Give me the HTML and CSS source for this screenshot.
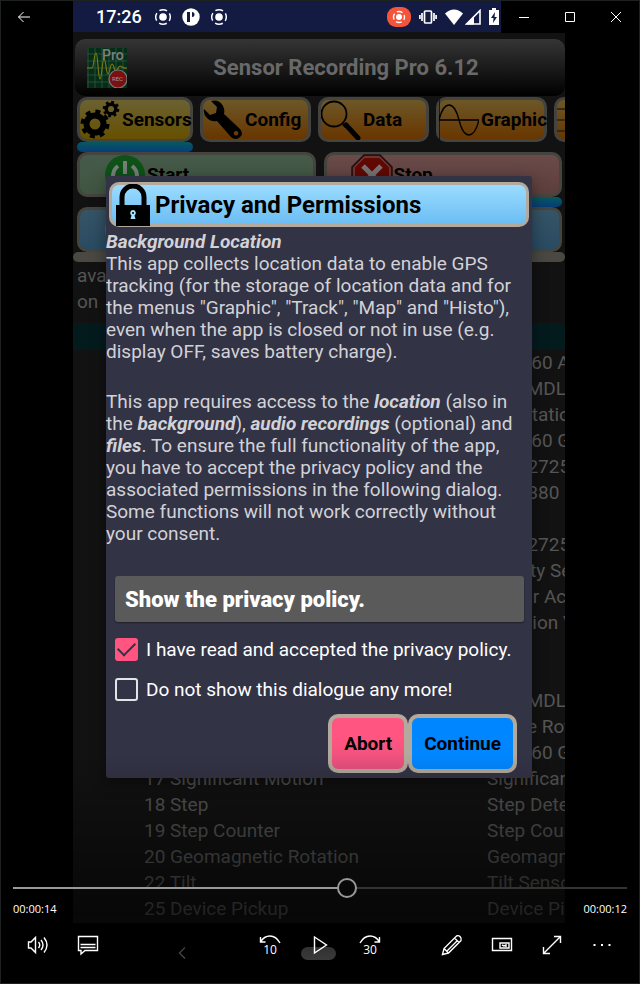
FILE: index.html
```
<!DOCTYPE html>
<html lang="en">

<head>
    <meta charset="UTF-8">
    <meta name="viewport" content="width=device-width, initial-scale=1.0">
    <title>Sensor Recording Pro</title>
    <link rel="stylesheet" href="styles.css">
</head>

<body>
    <div class="player">

        <div class="phone">
            <div class="status-bar">
                <span class="clock">17:26</span>
                <svg class="status-icon" viewBox="0 0 18 18"><circle cx="9" cy="9" r="3.800" fill="#fff"/><circle cx="9" cy="9" r="7.300" fill="none" stroke="#fff" stroke-width="1.500" stroke-dasharray="8 3.467" stroke-dashoffset="4"/></svg>
                <svg class="status-icon" viewBox="0 0 18 18"><circle cx="9" cy="9" r="8.700" fill="#fff"/><path d="M5 4h3v10H5zM10 4a2.500 2.500 0 1 1 0 5z" fill="#131b43"/></svg>
                <svg class="status-icon" viewBox="0 0 18 18"><circle cx="9" cy="9" r="3.800" fill="#fff"/><circle cx="9" cy="9" r="7.300" fill="none" stroke="#fff" stroke-width="1.500" stroke-dasharray="8 3.467" stroke-dashoffset="4"/></svg>
                <span class="status-right">
                    <svg width="24" height="20" viewBox="0 0 24 20"><rect width="24" height="20" rx="9" fill="#f4543a"/><circle cx="12" cy="10" r="3" fill="#fff"/><circle cx="12" cy="10" r="5.5" fill="none" stroke="#fff" stroke-width="1.4" stroke-dasharray="6 2.64" stroke-dashoffset="3"/></svg>
                    <svg width="18" height="16" viewBox="0 0 18 16" fill="none" stroke="#fff" stroke-width="1.7"><rect x="5.5" y="2" width="7" height="12" rx="1"/><path d="M3 4v8M.9 6v4M15 4v8M17.1 6v4"/></svg>
                    <svg width="18" height="16" viewBox="0 0 18 16"><path d="M0 4.500Q9-3.500 18 4.500L9 16z" fill="#fff"/></svg>
                    <svg width="16" height="16" viewBox="0 0 16 16"><path d="M1.500 15L15 1.500V15z" fill="none" stroke="#fff" stroke-width="1.6"/><path d="M1 15.500L9 7v8.500z" fill="#fff"/></svg>
                    <svg width="10" height="17" viewBox="0 0 10 17"><path d="M3 0h4v2h3v15H0V2h3z" fill="#fff"/><path d="M6 4L2 10h2.500L4 15l4-6H5.500z" fill="#131b43"/></svg>
                </span>
            </div>

            <div class="app">
                <header class="app-header">
                    <svg width="40" height="40" viewBox="0 0 40 40">
                        <rect width="40" height="40" fill="#062d18"/>
                        <path d="M1 0v40M8 0v40M15 0v40M22 0v40M29 0v40M36 0v40M0 6h40M0 13h40M0 20h40M0 27h40M0 34h40" stroke="#2e5540" stroke-width=".8"/>
                        <path d="M0 20h5C7 20 7 5 9 5s2 26 4 26 2-20 4-20 2 15 4 15 2-10 4-10 2 7 4 7 2-5 4-5 3 3 7 2" fill="none" stroke="#777b12" stroke-width="1.2"/>
                        <circle cx="31" cy="31" r="9" fill="#7c1010" stroke="#777" stroke-width="1.2"/>
                        <text x="15" y="12" class="logo-pro">Pro</text>
                        <text x="25" y="33" class="logo-rec">REC</text>
                    </svg>
                    <h1>Sensor Recording Pro 6.12</h1>
                </header>

                <nav class="tabs">
                    <button class="tab selected">
                        <svg viewBox="0 0 40 40"><g fill="none" stroke="#000"><circle cx="15" cy="24" r="8.500" stroke-width="6"/><circle cx="15" cy="24" r="12.500" stroke-width="4" stroke-dasharray="4.900 4.920"/><circle cx="31" cy="9" r="4.800" stroke-width="3.400"/><circle cx="31" cy="9" r="7" stroke-width="2.600" stroke-dasharray="2.750 2.750"/></g></svg>
                        Sensors
                    </button>
                    <button class="tab">
                        <svg viewBox="0 0 40 40"><path d="M8 1q8-2 12 5 2 4 1 8l16 15q4 5 0 8-4 4-9 0L14 21q-6 1-10-3Q0 14 1 9l6 6 6-2 1-6zM33 31a2.300 2.300 0 1 0 .1 0z" fill-rule="evenodd"/></svg>
                        Config
                    </button>
                    <button class="tab">
                        <svg viewBox="0 0 40 40" fill="none" stroke="#000"><circle cx="13" cy="14" r="12.500" stroke-width="1.800"/><path d="M22 24l3 3" stroke-width="2.500"/><path d="M25 25l12 13" stroke-width="5" stroke-linecap="round"/></svg>
                        Data
                    </button>
                    <button class="tab">
                        <svg viewBox="0 0 40 40" fill="none" stroke="#000" stroke-width="1.300"><path d="M0 0v40M0 20h40M0 20C5 0 15 0 20 20S35 40 40 20"/></svg>
                        Graphic
                    </button>
                    <button class="tab" aria-label="Track">
                        <svg viewBox="0 0 40 40" fill="none" stroke="#222" stroke-width="1.500"><path d="M0 9h40M0 20h40M0 31h40"/></svg>
                    </button>
                </nav>
                <div class="tab-marker"></div>

                <div class="actions">
                    <button class="action start">
                        <svg viewBox="0 0 42 42"><circle cx="21" cy="21" r="20" fill="#0e5218"/><path d="M14 12a12 12 0 1 0 14 0M21 7v13" fill="none" stroke="#777f78" stroke-width="4"/></svg>
                        Start
                    </button>
                    <button class="action stop">
                        <svg viewBox="0 0 42 42"><path d="M13 1h16l12 12v16L29 41H13L1 29V13z" fill="#610803" stroke="#211010" stroke-width="1.500"/><path d="M13.500 3h15L39 13.500v15L28.500 39h-15L3 28.500v-15z" fill="none" stroke="#756565"/><path d="M12 12l18 18M30 12L12 30" stroke="#787272" stroke-width="5"/></svg>
                        Stop
                    </button>
                </div>
                <div class="action-marker"></div>
                <div class="actions">
                    <button class="action info" aria-label="Info">
                        <svg viewBox="0 0 42 42"><circle cx="21" cy="21" r="20" fill="#526470"/></svg>
                    </button>
                    <button class="action info" aria-label="Help"></button>
                </div>
                <div class="divider"></div>

                <p class="available">available<br>on</p>
                <table class="sensors">
                    <thead>
                        <tr><th></th><th></th></tr>
                    </thead>
                    <tbody>
                        <tr><td></td><td>BMI160 Accelerometer</td></tr>
                        <tr><td></td><td>AK0 MDL</td></tr>
                        <tr><td></td><td>Orientation</td></tr>
                        <tr><td></td><td>BMI160 Gyroscope</td></tr>
                        <tr><td></td><td>TMD2725</td></tr>
                        <tr><td></td><td>BMP380</td></tr>
                        <tr><td></td><td></td></tr>
                        <tr><td></td><td>TMD2725</td></tr>
                        <tr><td></td><td>Gravity Sensor</td></tr>
                        <tr><td></td><td>Linear Acceleration</td></tr>
                        <tr><td></td><td>Rotation Vector</td></tr>
                        <tr><td></td><td></td></tr>
                        <tr><td></td><td></td></tr>
                        <tr><td></td><td>AK0 MDL</td></tr>
                        <tr><td></td><td>Game Rotation</td></tr>
                        <tr><td></td><td>BMI160 Gyroscope</td></tr>
                        <tr><td>17 Significant Motion</td><td>Significant Motion</td></tr>
                        <tr><td>18 Step</td><td>Step Detector</td></tr>
                        <tr><td>19 Step Counter</td><td>Step Counter</td></tr>
                        <tr><td>20 Geomagnetic Rotation</td><td>Geomagnetic Rotation</td></tr>
                        <tr><td>22 Tilt</td><td>Tilt Sensor</td></tr>
                        <tr><td>25 Device Pickup</td><td>Device Pickup</td></tr>
                    </tbody>
                </table>
            </div>

            <div class="phone-nav">
                <svg width="8" height="12" viewBox="0 0 8 12" fill="none" stroke="#555" stroke-width="1.500"><path d="M7 .500L1.500 6 7 11.500"/></svg>
                <span class="home-pill"></span>
            </div>

            <div class="dialog" role="dialog" aria-labelledby="dialog-title">
                <div class="dialog-title">
                    <svg width="36" height="42" viewBox="0 0 36 42"><path d="M7 23V13a11 11 0 0 1 22 0v10" fill="none" stroke="#000" stroke-width="5"/><path d="M1 21h34v21H1z"/><path d="M18 26a3 3 0 0 1 1.500 5.500L20.500 35h-5l1-3.500A3 3 0 0 1 18 26z" fill="#a8e0ff"/><circle cx="18" cy="29" r="1"/></svg>
                    <h2 id="dialog-title">Privacy and Permissions</h2>
                </div>
                <div class="dialog-text">
                    <h3>Background Location</h3>
                    <p>This app collects location data to enable GPS tracking (for the storage of location data and for the menus "Graphic", "Track", "Map" and "Histo"), even when the app is closed or not in use (e.g. display OFF, saves battery charge).</p>
                    <p>This app requires access to the <b>location</b> (also in the <b>background</b>), <b>audio recordings</b> (optional) and <b>files</b>. To ensure the full functionality of the app, you have to accept the privacy policy and the associated permissions in the following dialog. Some functions will not work correctly without your consent.</p>
                </div>
                <div class="dialog-form">
                    <button class="policy-button">Show the privacy policy.</button>
                    <label class="check"><input type="checkbox" checked>I have read and accepted the privacy policy.</label>
                    <label class="check"><input type="checkbox">Do not show this dialogue any more!</label>
                    <div class="dialog-buttons">
                        <button class="abort">Abort</button>
                        <button class="continue">Continue</button>
                    </div>
                </div>
            </div>
        </div>

        <div class="window-bar">
            <button class="win-button" aria-label="Back"><svg width="14" height="12" viewBox="0 0 14 12"><path d="M13 6H1.500M6.500 1l-5 5 5 5"/></svg></button>
            <div class="win-right">
                <button class="win-button" aria-label="Minimize"><svg width="10" height="10" viewBox="0 0 10 10"><path d="M0 5.500h10"/></svg></button>
                <button class="win-button" aria-label="Maximize"><svg width="10" height="10" viewBox="0 0 10 10"><path d="M.5.500h9v9h-9z"/></svg></button>
                <button class="win-button" aria-label="Close"><svg width="10" height="10" viewBox="0 0 10 10"><path d="M0 0l10 10M10 0L0 10"/></svg></button>
            </div>
        </div>

        <div class="controls">
            <input class="seek" type="range" min="0" max="1000" value="545" aria-label="Seek">
            <div class="times"><span>00:00:14</span><span>00:00:12</span></div>
            <div class="control-row">
                <div class="group">
                    <button aria-label="Volume"><svg viewBox="0 0 22 22"><path d="M1.500 8H4l4.500-4.500v15L4 14H1.500zM11.500 8q2.500 3 0 6M14 6q4 5 0 10M17 3.500q6 7.500 0 15"/></svg></button>
                    <button aria-label="Captions"><svg viewBox="0 0 22 22"><path d="M1.500 2.500h19v14H8l-4 3.500v-3.500H1.500zM3.500 10.500h15M3.500 13.500h15"/></svg></button>
                </div>
                <div class="group">
                    <button aria-label="Back 10 seconds"><svg viewBox="0 0 22 22"><path d="M1.500 3v5h5M1.500 8Q5 2 11 2t10 7"/><text x="11" y="20">10</text></svg></button>
                    <button aria-label="Play"><svg viewBox="0 0 22 22"><path d="M5.500 3l12 8-12 8z"/></svg></button>
                    <button aria-label="Forward 30 seconds"><svg viewBox="0 0 22 22"><path d="M20.500 3v5h-5M20.500 8Q17 2 11 2T1 9"/><text x="11" y="20">30</text></svg></button>
                </div>
                <div class="group right">
                    <button aria-label="Edit"><svg viewBox="0 0 22 22"><path d="M1.500 20.500l1.500-6L15.500 2q2-1 3.700.700T20 6.500L7.500 19zM3 14.500L7.500 19M13.500 4l4.500 4.500M16 7L6 17"/></svg></button>
                    <button aria-label="Mini view"><svg viewBox="0 0 22 22"><path d="M1.500 4.500h19v12h-19z"/><path d="M9 9h9v5H9z"/><path d="M11 11l2 1 2-1v2"/></svg></button>
                    <button aria-label="Full screen"><svg viewBox="0 0 22 22"><path d="M2.500 19.500l17-17M13 2.500h6.500V9M2.500 13v6.500H9"/></svg></button>
                    <button aria-label="More"><svg viewBox="0 0 22 22"><path d="M2.500 10h2v2h-2zM10 10h2v2h-2zM17.500 10h2v2h-2z" fill="#fff" stroke="none"/></svg></button>
                </div>
            </div>
        </div>
    </div>
</body>

</html>
```
FILE: styles.css
```
* {
    box-sizing: border-box;
}

body {
    margin: 0;
    background-color: #000;
    font-family: Roboto, sans-serif;
}

button {
    padding: 0;
    border: none;
    background: none;
    font-family: inherit;
}

svg {
    display: block;
    flex: none;
}

.player {
    position: relative;
    padding: 0 74px 0 72px;
    border: 1px solid #1d211f;
    overflow: hidden;
}

.phone {
    position: relative;
    background-color: #121212;
}

/* Android status bar */
.status-bar {
    display: flex;
    align-items: center;
    gap: 10px;
    height: 31px;
    padding-left: 23px;
    padding-right: 66px;
    background-color: #131b43;
}

.clock {
    margin-right: 2px;
    color: #fff;
    font-size: 18px;
    font-weight: 500;
}

.status-icon {
    width: 18px;
    height: 18px;
}

.status-right {
    display: flex;
    align-items: center;
    gap: 8px;
    margin-left: auto;
}

.status-right svg:nth-child(4) {
    margin-left: -6px;
}

/* App behind the dialog */
.app {
    height: 891px;
    padding-top: 7px;
    overflow: hidden;
}

.app-header {
    display: flex;
    align-items: center;
    height: 57px;
    margin-left: 2px;
    padding-left: 12px;
    border-radius: 10px;
    background: linear-gradient(#353535, #000);
}

.app-header h1 {
    flex: 1;
    margin: 0;
    color: #696969;
    font-size: 22px;
    font-weight: 700;
    text-align: center;
}

.logo-pro {
    fill: #7f7f7f;
    font-size: 14px;
    font-weight: 500;
}

.logo-rec {
    fill: #999;
    font-size: 6px;
}

.tabs {
    display: flex;
    gap: 7px;
    margin-top: 1px;
    padding-left: 4px;
    overflow: hidden;
}

.tab {
    display: flex;
    flex: none;
    align-items: center;
    gap: 2px;
    width: 111px;
    height: 45px;
    border: 3px solid #45433e;
    border-radius: 10px;
    background: linear-gradient(#6d5728, #693600);
    color: #000;
    font-size: 19px;
    font-weight: 700;
    white-space: nowrap;
}

.tab.selected {
    width: 116px;
    background: linear-gradient(#6b6132, #665000);
}

.tab svg {
    width: 40px;
    height: 40px;
}

.tab-marker,
.action-marker {
    height: 10px;
    border-radius: 5px;
    background: linear-gradient(#07585f, #073d78);
}

.tab-marker {
    width: 116px;
    margin-left: 4px;
}

.actions,
.action-marker {
    margin: 0 3px 0 4px;
}

.actions {
    display: grid;
    grid-template-columns: 1fr 1fr;
    gap: 8px;
}

.action-marker {
    margin-left: 50%;
}

.action {
    display: flex;
    align-items: center;
    gap: 1px;
    height: 45px;
    padding-left: 24px;
    border: 3px solid #45443f;
    border-radius: 10px;
    color: #000;
    font-size: 19px;
    font-weight: 700;
}

.action svg {
    width: 42px;
    height: 42px;
}

.start {
    background: linear-gradient(#465a4a, #405641);
}

.stop {
    background: linear-gradient(#694b4a, #5e3e3d);
}

.info {
    background: linear-gradient(#365466, #294b62);
}

.divider {
    height: 10px;
    border-radius: 5px;
    background-color: #494842;
}

.available {
    margin: 1px 4px 8px;
    color: #555;
    font-size: 19px;
    line-height: 26px;
}

.sensors {
    width: 100%;
    border-collapse: collapse;
    table-layout: fixed;
    color: #555;
    font-size: 19px;
    line-height: 26px;
}

.sensors th {
    height: 27px;
    padding: 0;
    background-color: #041b1e;
}

.sensors th:last-child {
    width: 78px;
}

.sensors td {
    height: 26px;
    padding: 0;
    white-space: nowrap;
}

.sensors td:first-child {
    padding-left: 71px;
}

.phone-nav {
    display: grid;
    grid-template-columns: repeat(3, 1fr);
    place-items: center;
    height: 60px;
    padding: 0 41px;
    background-color: #000;
}

.home-pill {
    width: 35px;
    height: 13px;
    border-radius: 7px;
    background-color: #484848;
}

/* Privacy dialog */
.dialog {
    position: absolute;
    top: 175px;
    left: 33px;
    right: 33px;
    padding: 6px 3px 5px 0;
    border-radius: 3px;
    background-color: #333346;
    box-shadow: 0 4px 16px rgba(0, 0, 0, 0.4);
    color: #d2d2d6;
}

.dialog-title {
    display: flex;
    align-items: center;
    gap: 4px;
    height: 45px;
    margin-left: 3px;
    padding-left: 3px;
    border: 3px solid #b3a99c;
    border-radius: 10px;
    background: linear-gradient(#9bdcff, #6bbdf3);
    color: #000;
}

.dialog-title h2 {
    margin: 0;
    font-size: 24px;
    font-weight: 700;
}

.dialog-text {
    margin-top: 3px;
    font-size: 19px;
    line-height: 22px;
}

.dialog-text h3 {
    margin: 0;
    font-size: 19px;
    font-style: italic;
    line-height: 23px;
}

.dialog-text b {
    font-style: italic;
}

.dialog-text p {
    margin: 0 0 28px;
}

.dialog-form {
    padding: 3px 5px 0 9px;
}

.policy-button {
    display: block;
    width: 100%;
    height: 46px;
    margin-bottom: 7px;
    padding-left: 10px;
    border-radius: 3px;
    background-color: #5a5a5a;
    box-shadow: 0 1px 2px rgba(0, 0, 0, 0.4);
    color: #fff;
    font-size: 22px;
    font-weight: 900;
    text-align: left;
}

.check {
    display: flex;
    align-items: center;
    gap: 8px;
    height: 40px;
    color: #fff;
    font-size: 19px;
    white-space: nowrap;
}

.check input {
    display: grid;
    place-items: center;
    appearance: none;
    width: 23px;
    height: 23px;
    margin: 0;
    border: 2px solid #e4e4e8;
    border-radius: 3px;
}

.check input:checked {
    border-color: #ff5580;
    background-color: #ff5580;
}

/* Tick */
.check input:checked::after {
    content: "";
    width: 15px;
    height: 8px;
    margin-bottom: 5px;
    border: solid #333346;
    border-width: 0 0 2px 2px;
    transform: rotate(-45deg);
}

.dialog-buttons {
    display: flex;
    justify-content: flex-end;
    margin-top: 5px;
    padding-right: 7px;
}

.dialog-buttons button {
    height: 59px;
    padding: 0 12px;
    border: 4px solid #b3a99c;
    border-radius: 10px;
    color: #000;
    font-size: 19px;
    font-weight: 700;
}

.dialog-buttons .abort {
    background: linear-gradient(#ff5580, #ff5580 40%, #e8507f);
}

.dialog-buttons .continue {
    background-color: #0087ff;
}

/* Window buttons */
.window-bar {
    position: absolute;
    top: 0;
    left: 0;
    right: 0;
    display: flex;
    justify-content: space-between;
}

.win-right {
    display: flex;
    background-color: #000;
}

.win-button {
    display: grid;
    place-items: center;
    width: 46px;
    height: 32px;
}

.win-button svg {
    fill: none;
    stroke: #fff;
    stroke-width: 1;
}

/* Player controls */
.controls {
    position: absolute;
    left: 0;
    right: 0;
    bottom: 0;
    padding: 125px 12px 13px;
    background: linear-gradient(rgba(0, 0, 0, 0), rgba(0, 0, 0, 0.6) 70%, rgba(0, 0, 0, 0));
    pointer-events: none;
}

.controls button,
.seek {
    pointer-events: auto;
}

.seek {
    display: block;
    appearance: none;
    width: 100%;
    height: 20px;
    margin: 0;
    background: linear-gradient(90deg, #999 53%, #333 53%) center / 100% 2px no-repeat;
}

.seek::-webkit-slider-thumb {
    appearance: none;
    width: 20px;
    height: 20px;
    border: 2px solid #999;
    border-radius: 50%;
    background-color: #080808;
}

.times {
    display: flex;
    justify-content: space-between;
    color: #fff;
    font-family: "Open Sans", sans-serif;
    font-size: 11px;
    line-height: 22px;
}

.control-row {
    display: grid;
    grid-template-columns: 1fr auto 1fr;
}

.group {
    display: flex;
}

.group.right {
    justify-content: flex-end;
}

.group button {
    display: grid;
    place-items: center;
    width: 50px;
    height: 50px;
}

.group svg {
    width: 22px;
    height: 22px;
    fill: none;
    stroke: #fff;
    stroke-width: 1.4;
    overflow: visible;
}

.group text {
    fill: #fff;
    stroke: none;
    font-family: "Open Sans", sans-serif;
    font-size: 12px;
    text-anchor: middle;
}
```
